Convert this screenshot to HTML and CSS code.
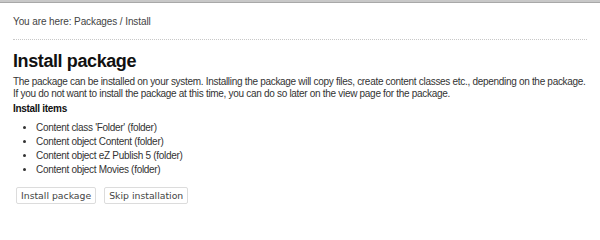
FILE: index.html
```html
<!DOCTYPE html>
<html>
<head>
<meta charset="utf-8">
<link rel="stylesheet" href="styles.css">
</head>
<body>
<div class="topbar"></div>
<div class="page">
  <div class="breadcrumb">You are here: Packages / Install</div>
  <div class="separator"></div>
  <h1 class="title">Install package</h1>
  <p class="intro">The package can be installed on your system. Installing the package will copy files, create content classes etc., depending on the package.<br>If you do not want to install the package at this time, you can do so later on the view page for the package.</p>
  <h3 class="subtitle">Install items</h3>
  <ul class="items">
    <li>Content class 'Folder' (folder)</li>
    <li>Content object Content (folder)</li>
    <li>Content object eZ Publish 5 (folder)</li>
    <li>Content object Movies (folder)</li>
  </ul>
  <div class="actions">
    <button class="btn" type="button">Install package</button>
    <button class="btn" type="button">Skip installation</button>
  </div>
</div>
</body>
</html>
```

FILE: styles.css
```css
html, body {
  margin: 0;
  padding: 0;
  background: #ffffff;
}
body {
  font-family: "Liberation Sans", Arial, sans-serif;
  font-size: 10px;
  letter-spacing: -0.3px;
  color: #333333;
}
.topbar {
  height: 2px;
  background: #c8c8c8;
  border-bottom: 1px solid #a8a8a8;
}
.page {
  padding: 0 13px;
}
.breadcrumb {
  padding-top: 13px;
  line-height: 12px;
  letter-spacing: -0.1px;
  color: #444444;
}
.separator {
  margin-top: 11px;
  border-top: 1px dotted #c8c8c8;
}
.title {
  margin: 10px 0 0 0;
  font-size: 18px;
  line-height: 22px;
  letter-spacing: -0.4px;
  font-weight: bold;
  color: #111111;
}
.intro {
  margin: 4px 0 0 0;
  line-height: 12px;
  color: #333333;
}
.subtitle {
  margin: 3px 0 0 0;
  font-size: 10px;
  line-height: 12px;
  font-weight: bold;
  color: #111111;
}
.items {
  margin: 6px 0 0 0;
  padding-left: 23px;
  line-height: 14px;
}
.items li {
  margin: 0;
}
.actions {
  display: flex;
  gap: 8px;
  margin-top: 10px;
  padding-left: 3px;
}
.btn {
  font-family: "DejaVu Sans", Verdana, sans-serif;
  font-size: 9.3px;
  letter-spacing: 0;
  color: #444444;
  background: #ffffff;
  border: 1px solid #dcdcdc;
  border-radius: 2px;
  height: 17px;
  padding: 0 4px;
  line-height: 15px;
}
```
